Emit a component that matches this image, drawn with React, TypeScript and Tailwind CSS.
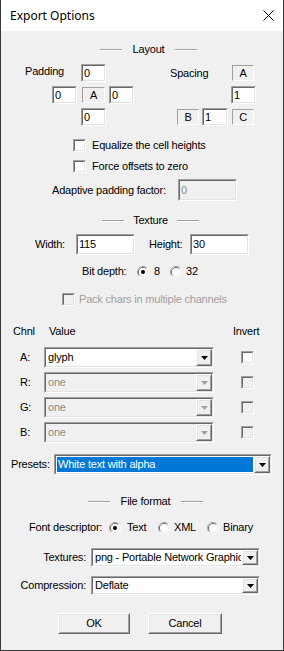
import type { ReactNode } from 'react';

// classic win32 3d edges
const Sunken = ({ className = '', inner = 'bg-white', children }: { className?: string; inner?: string; children?: ReactNode }) => (
  <div className={`shrink-0 border border-t-[#a0a0a0] border-l-[#a0a0a0] border-b-white border-r-white ${className}`}>
    <div className={`flex h-full w-full items-center border border-t-[#696969] border-l-[#696969] border-b-[#e3e3e3] border-r-[#e3e3e3] ${inner}`}>
      {children}
    </div>
  </div>
);

const Raised = ({ className = '', children }: { className?: string; children?: ReactNode }) => (
  <div className={`shrink-0 border border-t-white border-l-white border-b-[#696969] border-r-[#696969] ${className}`}>
    <div className="flex h-full w-full items-center justify-center border border-t-[#e3e3e3] border-l-[#e3e3e3] border-b-[#a0a0a0] border-r-[#a0a0a0] bg-[#f0f0f0]">
      {children}
    </div>
  </div>
);

const Edit = ({ value, w, h = 'h-[18px]', disabled }: { value: string; w: string; h?: string; disabled?: boolean }) => (
  <Sunken className={`${w} ${h}`} inner={disabled ? 'bg-[#f0f0f0] text-[#8c8c8c]' : 'bg-white'}>
    <span className="pl-[1px]">{value}</span>
  </Sunken>
);

const StaticBox = ({ label, className = '' }: { label: string; className?: string }) => (
  <div className={`flex shrink-0 items-center justify-center border border-t-[#a0a0a0] border-l-[#a0a0a0] border-b-white border-r-white ${className}`}>
    {label}
  </div>
);

const Check = ({ disabled }: { disabled?: boolean }) => (
  <Sunken className="h-[13px] w-[13px]" inner={disabled ? 'bg-[#f0f0f0]' : 'bg-white'} />
);

const Radio = ({ checked }: { checked?: boolean }) => (
  <svg width="12" height="12" viewBox="0 0 12 12" className="shrink-0">
    <path d="M2.11 9.89 A5.5 5.5 0 0 1 9.89 2.11" fill="none" stroke="#a0a0a0" />
    <path d="M9.89 2.11 A5.5 5.5 0 0 1 2.11 9.89" fill="none" stroke="#ffffff" />
    <path d="M2.82 9.18 A4.5 4.5 0 0 1 9.18 2.82" fill="none" stroke="#696969" />
    <path d="M9.18 2.82 A4.5 4.5 0 0 1 2.82 9.18" fill="none" stroke="#e3e3e3" />
    <circle cx="6" cy="6" r="4" fill="#ffffff" />
    {checked && <circle cx="6" cy="6" r="2" fill="#000000" />}
  </svg>
);

const Arrow = ({ disabled }: { disabled?: boolean }) => (
  <svg width="7" height="4" viewBox="0 0 7 4">
    <polygon points="0,0 7,0 3.5,4" fill={disabled ? '#a0a0a0' : '#000000'} />
  </svg>
);

const Combo = ({
  value,
  w,
  h = 'h-[21px]',
  disabled,
  selected,
}: {
  value: string;
  w: string;
  h?: string;
  disabled?: boolean;
  selected?: boolean;
}) => (
  <Sunken className={`${w} ${h}`} inner={disabled ? 'bg-[#f0f0f0]' : 'bg-white'}>
    <div className="flex h-full min-w-0 flex-1 items-center p-[1px]">
      <div
        className={`flex h-full w-full items-center overflow-hidden whitespace-nowrap pl-[1px] ${
          selected ? 'bg-[#0078d7] text-white' : disabled ? 'text-[#8c8c8c]' : ''
        }`}
      >
        {value}
      </div>
    </div>
    <Raised className="h-full w-[16px]">
      <Arrow disabled={disabled} />
    </Raised>
  </Sunken>
);

const Etched = () => <div className="h-[2px] w-[22px] border-t border-b border-t-[#a0a0a0] border-b-white" />;

const Heading = ({ pl, box, text }: { pl: string; box: string; text: string }) => (
  <div className={`flex h-[13px] items-center ${pl}`}>
    <Etched />
    <div className={`text-center ${box}`}>{text}</div>
    <Etched />
  </div>
);

const channels = [
  { name: 'A:', value: 'glyph', disabled: false },
  { name: 'R:', value: 'one', disabled: true },
  { name: 'G:', value: 'one', disabled: true },
  { name: 'B:', value: 'one', disabled: true },
];

export default function App() {
  return (
    <div className="flex h-[651px] w-[284px] flex-col overflow-hidden border-x border-b border-[#3a3a3a] bg-[#f0f0f0] font-['Liberation_Sans',Arial,sans-serif] text-[11px] leading-[13px] tracking-[-0.2px] text-black">
      {/* title bar */}
      <div className="flex h-[31px] shrink-0 items-center justify-between bg-white pl-[9px] pr-[9px]">
        <span className="font-['Noto_Sans',sans-serif] text-[12px] tracking-normal">Export Options</span>
        <svg width="11" height="11" viewBox="0 0 11 11">
          <path d="M0.5 0.5 L10.5 10.5 M10.5 0.5 L0.5 10.5" stroke="#000" strokeWidth="1" />
        </svg>
      </div>

      {/* Layout */}
      <div className="mt-[12px]">
        <Heading pl="pl-[99px]" box="w-[53px]" text="Layout" />
      </div>

      <div className="mt-[8px] flex flex-col gap-[4px]">
        <div className="flex h-[18px] items-center">
          <div className="ml-[24px] w-[56px] self-start pt-[1px]">Padding</div>
          <Edit value="0" w="w-[25px]" />
          <div className="ml-[64px] w-[62px]">Spacing</div>
          <StaticBox label="A" className="h-[16px] w-[22px]" />
        </div>
        <div className="flex h-[18px] items-center">
          <div className="ml-[51px]" />
          <Edit value="0" w="w-[25px]" />
          <StaticBox label="A" className="ml-[5px] h-[16px] w-[23px]" />
          <div className="ml-[4px]" />
          <Edit value="0" w="w-[25px]" />
          <div className="ml-[97px]" />
          <Edit value="1" w="w-[25px]" />
        </div>
        <div className="flex h-[18px] items-center">
          <div className="ml-[80px]" />
          <Edit value="0" w="w-[25px]" />
          <StaticBox label="B" className="ml-[71px] h-[16px] w-[22px]" />
          <div className="ml-[3px]" />
          <Edit value="1" w="w-[26px]" />
          <StaticBox label="C" className="ml-[4px] h-[16px] w-[22px]" />
        </div>
      </div>

      <div className="mt-[13px] flex h-[13px] items-center pl-[72px]">
        <Check />
        <span className="ml-[6px]">Equalize the cell heights</span>
      </div>
      <div className="mt-[8px] flex h-[13px] items-center pl-[72px]">
        <Check />
        <span className="ml-[6px]">Force offsets to zero</span>
      </div>

      <div className="mt-[6px] flex h-[22px] items-center pl-[51px]">
        <div className="w-[126px]">Adaptive padding factor:</div>
        <Edit value="0" w="w-[59px]" h="h-[22px]" disabled />
      </div>

      {/* Texture */}
      <div className="mt-[13px]">
        <Heading pl="pl-[101px]" box="w-[53px]" text="Texture" />
      </div>

      <div className="mt-[7px] flex h-[21px] items-center pl-[34px]">
        <div className="w-[41px]">Width:</div>
        <Edit value="115" w="w-[59px]" h="h-[21px]" />
        <div className="w-[55px] pl-[14px]">Height:</div>
        <Edit value="30" w="w-[59px]" h="h-[21px]" />
      </div>

      <div className="mt-[10px] flex h-[13px] items-center pl-[81px]">
        <div className="w-[55px]">Bit depth:</div>
        <Radio checked />
        <div className="ml-[5px] w-[16px]">8</div>
        <Radio />
        <div className="ml-[4px]">32</div>
      </div>

      <div className="mt-[15px] flex h-[13px] items-center pl-[61px] text-[#a0a0a0]">
        <Check disabled />
        <span className="ml-[4px]">Pack chars in multiple channels</span>
      </div>

      {/* channels */}
      <div className="mt-[19px] flex h-[13px] items-center pl-[12px]">
        <div className="w-[36px]">Chnl</div>
        <div className="w-[184px]">Value</div>
        <div>Invert</div>
      </div>

      <div className="mt-[9px] flex flex-col gap-[4px]">
        {channels.map((c) => (
          <div key={c.name} className="flex h-[21px] items-center pl-[19px]">
            <div className="w-[24px]">{c.name}</div>
            <Combo value={c.value} w="w-[170px]" disabled={c.disabled} />
            <div className="ml-[27px]">
              <Check disabled={c.disabled} />
            </div>
          </div>
        ))}
      </div>

      <div className="mt-[11px] flex h-[21px] items-center pl-[10px]">
        <div className="w-[43px]">Presets:</div>
        <Combo value="White text with alpha" w="w-[218px]" selected />
      </div>

      {/* File format */}
      <div className="mt-[20px]">
        <Heading pl="pl-[87px]" box="w-[71px]" text="File format" />
      </div>

      <div className="mt-[13px] flex h-[13px] items-center pl-[28px]">
        <div className="w-[80px]">Font descriptor:</div>
        <Radio checked />
        <div className="ml-[6px] w-[31px]">Text</div>
        <Radio />
        <div className="ml-[4px] w-[33px]">XML</div>
        <Radio />
        <div className="ml-[4px]">Binary</div>
      </div>

      <div className="mt-[14px] flex h-[19px] items-center">
        <div className="w-[90px] pr-[5px] text-right">Textures:</div>
        <Combo value="png - Portable Network Graphics" w="w-[169px]" h="h-[19px]" />
      </div>
      <div className="mt-[9px] flex h-[19px] items-center">
        <div className="w-[90px] pr-[5px] text-right">Compression:</div>
        <Combo value="Deflate" w="w-[169px]" h="h-[19px]" />
      </div>

      <div className="mt-[18px] flex h-[21px] items-center pl-[57px]">
        <Raised className="h-[21px] w-[72px]">OK</Raised>
        <div className="ml-[18px]" />
        <Raised className="h-[21px] w-[74px]">Cancel</Raised>
      </div>
    </div>
  );
}
